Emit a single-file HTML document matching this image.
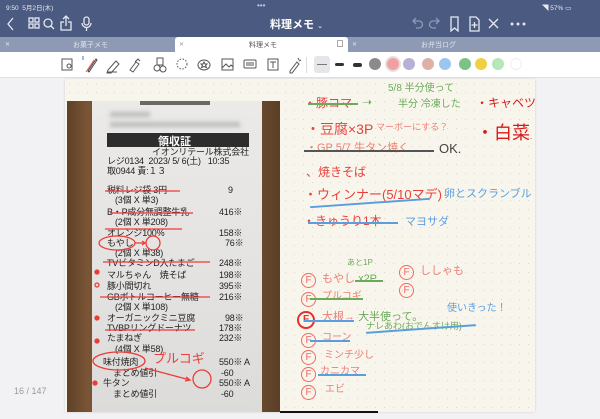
<!DOCTYPE html>
<html><head><meta charset="utf-8"><style>
*{margin:0;padding:0;box-sizing:border-box}
body{width:600px;height:419px;overflow:hidden;background:#f2f2f4;font-family:"Liberation Sans","Noto Sans CJK JP",sans-serif;position:relative}
.a{position:absolute;white-space:nowrap}
#top{position:absolute;left:0;top:0;width:600px;height:37px;background:#4b5a80}
#tabs{position:absolute;left:0;top:37px;width:600px;height:15px;background:#8e9ab4}
#tool{position:absolute;left:0;top:52px;width:600px;height:26px;background:#fff;border-bottom:1px solid #e2e2e2}
#page{position:absolute;left:65px;top:79px;width:470px;height:333px;background:#f8f6ec;background-image:radial-gradient(#dcd9cc 0.6px,transparent 0.8px);background-size:9px 9px;box-shadow:0 0 2px #ccc}
#photo{position:absolute;left:67px;top:101px;width:213px;height:311px;background:linear-gradient(90deg,#5e4128,#7b5535 10%,#6a4a2e 20%,#7a5838 80%,#5a3e26)}
#paper{position:absolute;left:92px;top:101px;width:170px;height:311px;background:linear-gradient(180deg,#ebeae8,#e3e2e0 60%,#dcdbd9)}
.r{font-size:9px;color:#222;line-height:10px;letter-spacing:-0.2px}
.h{font-family:"Liberation Sans","Noto Sans CJK JP",sans-serif;line-height:1}
.red{color:#e8403a}.grn{color:#6aaa5a}.blu{color:#5a9ee0}.pnk{color:#ee7d72}
.s{position:absolute;height:2px}
.f{position:absolute;width:15px;height:15px;border:1.3px solid #ee6a60;border-radius:50%;color:#ee6a60;font-size:10px;text-align:center;line-height:13px}
.dot{position:absolute;top:58px;width:12px;height:12px;border-radius:50%}
</style></head><body>
<div id="top"></div>
<div class="a" style="left:6px;top:2px;font-size:6.5px;color:#e8ebf2">9:50 &nbsp;5月2日(木)</div>
<div class="a" style="left:257px;top:1px;font-size:8px;color:#c8cde0">•••</div>
<div class="a" style="left:542px;top:2px;font-size:6.5px;color:#e8ebf2">◥ 57% ▭</div>
<div class="a" style="left:270px;top:16px;font-size:11px;color:#fff;font-weight:bold">料理メモ <span style="font-size:7px;font-weight:normal">⌄</span></div>
<svg class="a" style="left:0;top:14px" width="600" height="20" fill="none" stroke="#e6e9f2" stroke-width="1.3">
<path d="M13 4l-5 6 5 6"/>
<rect x="29" y="4" width="4" height="4"/><rect x="35" y="4" width="4" height="4"/><rect x="29" y="10" width="4" height="4"/><rect x="35" y="10" width="4" height="4"/>
<circle cx="48" cy="9" r="4"/><path d="M51 12l3 3"/>
<path d="M64 8h-3v8h10v-8h-3M66 12V3M63 5l3-3 3 3"/>
<rect x="84" y="3" width="5" height="8" rx="2.5"/><path d="M82 9a4.5 4.5 0 009 0M86.5 14v3"/>
<path stroke="#8f9ab8" d="M413 7h6a3.5 3.5 0 010 7h-3M416 4l-3 3 3 3M439 7h-6a3.5 3.5 0 000 7h3M436 4l3 3-3 3"/>
<path d="M451 3h7v14l-3.5-3-3.5 3z"/>
<path d="M470 3h6l3 3v11h-9zM474.5 8v6M471.5 11h6"/>
<path d="M489 5l9 9M498 5l-9 9"/>
<circle cx="512" cy="10" r=".8" fill="#fff"/><circle cx="518" cy="10" r=".8" fill="#fff"/><circle cx="524" cy="10" r=".8" fill="#fff"/>
</svg>
<div id="tabs"></div>
<div class="a" style="left:175px;top:37px;width:173px;height:16px;background:#fff;border-radius:3px 3px 0 0"></div>
<div class="a" style="left:5px;top:41px;font-size:6px;color:#dfe3ec">✕</div>
<div class="a" style="left:73px;top:40px;font-size:7px;color:#dfe3ec">お菓子メモ</div>
<div class="a" style="left:179px;top:41px;font-size:6px;color:#999">✕</div>
<div class="a" style="left:249px;top:40px;font-size:7px;color:#555">料理メモ</div>
<div class="a" style="left:337px;top:40px;width:6px;height:7px;border:1px solid #aaa"></div>
<div class="a" style="left:352px;top:41px;font-size:6px;color:#dfe3ec">✕</div>
<div class="a" style="left:421px;top:40px;font-size:7px;color:#dfe3ec">お弁当ログ</div>
<div id="tool"></div>
<svg class="a" style="left:0;top:52px" width="600" height="26" fill="none" stroke="#555" stroke-width="1">
<rect x="62" y="7" width="10" height="11"/><circle cx="69" cy="14" r="2"/>
<path stroke="#e55" d="M86 20l8-12"/><path stroke="#444" d="M88 19l8-12 1 1-8 12z"/><path stroke="#3a7bd5" d="M83 4v4"/>
<path d="M108 18l8-9 3 3-8 9h-4zM107 20h10"/>
<path d="M130 18l6-8 3 2-6 8zM135 10l3-3 2 2"/>
<rect x="157" y="6" width="6" height="7"/><circle cx="157" cy="16" r="3"/><circle cx="163" cy="17" r="3"/>
<circle cx="182" cy="12" r="5" stroke-dasharray="1.5 1.5"/>
<ellipse cx="204" cy="13" rx="6" ry="5"/><path d="M204 10l1 2h2l-1.5 1.5 1 2-2.5-1-2.5 1 1-2-1.5-1.5h2z"/>
<rect x="222" y="7" width="11" height="11"/><path d="M222 16l4-4 3 3 2-2 2 2"/>
<rect x="244" y="8" width="12" height="8" rx="1"/><path d="M246 11h8M246 13h8"/>
<rect x="268" y="7" width="10" height="11"/><path d="M270 10h6M273 10v6"/>
<path d="M290 19l7-9 2 2-7 9h-2zM298 6l1 2M301 8l-2 1"/>
</svg>
<div class="a" style="left:306px;top:57px;width:1px;height:16px;background:#ddd"></div>
<div class="a" style="left:314px;top:56px;width:16px;height:17px;background:#e6e6ea;border-radius:3px"></div>
<div class="a" style="left:317px;top:64px;width:10px;height:1px;background:#777"></div>
<div class="a" style="left:335px;top:63px;width:9px;height:3px;background:#333;border-radius:2px"></div>
<div class="a" style="left:353px;top:63px;width:9px;height:3.5px;background:#333;border-radius:2px"></div>
<div class="dot" style="left:369px;background:#8b8b8b"></div>
<div class="dot" style="left:387px;background:#f0a0a0;box-shadow:0 0 0 2px #e8e0e0"></div>
<div class="dot" style="left:403px;background:#b8b0d6"></div>
<div class="dot" style="left:422px;background:#dfb0a8"></div>
<div class="dot" style="left:439px;background:#9dc6ef"></div>
<div class="dot" style="left:459px;background:#7cc288"></div>
<div class="dot" style="left:475px;background:#f0d040"></div>
<div class="dot" style="left:492px;background:#b4e8b8"></div>
<div class="dot" style="left:510px;background:#fff;border:1px solid #eee"></div>

<div id="page"></div>
<div id="photo"></div>
<div id="paper"></div>
<div class="a" style="left:140px;top:101px;width:70px;height:4px;background:#333;opacity:.7"></div>
<div class="a" style="left:110px;top:112px;width:40px;height:5px;background:#bbb;filter:blur(2px)"></div>
<div class="a" style="left:110px;top:122px;width:130px;height:5px;background:#bbb;filter:blur(2px)"></div>
<div class="a" style="left:107px;top:133px;width:142px;height:14px;background:#2d2d2d"></div>
<div class="a" style="left:158px;top:133px;font-size:11px;color:#fff;font-weight:bold">領収証</div>
<div class="a r" style="left:152px;top:147px">イオンリテール株式会社</div>
<div class="a r" style="left:107px;top:156px">レジ0134 &nbsp;2023/ 5/ 6(土) &nbsp;&nbsp;10:35</div>
<div class="a r" style="left:107px;top:166px">取0944 責:１３</div>
<div class="a r" style="left:107px;top:185px">税料レジ袋 3円</div><div class="a r" style="left:228px;top:185px">9</div>
<div class="a r" style="left:115px;top:195px">(3個 X 単3)</div>
<div class="a r" style="left:107px;top:207px">B・P成分無調整牛乳</div><div class="a r" style="left:219px;top:207px">416※</div>
<div class="a r" style="left:115px;top:217px">(2個 X 単208)</div>
<div class="a r" style="left:107px;top:228px">オレンジ100%</div><div class="a r" style="left:219px;top:228px">158※</div>
<div class="a r" style="left:107px;top:238px">もやし</div><div class="a r" style="left:225px;top:238px">76※</div>
<div class="a r" style="left:115px;top:248px">(2個 X 単38)</div>
<div class="a r" style="left:107px;top:258px">TVビタミンD入たまご</div><div class="a r" style="left:219px;top:258px">248※</div>
<div class="a r" style="left:107px;top:270px">マルちゃん　焼そば</div><div class="a r" style="left:219px;top:270px">198※</div>
<div class="a r" style="left:107px;top:281px">豚小間切れ</div><div class="a r" style="left:219px;top:281px">395※</div>
<div class="a r" style="left:107px;top:292px">GBボトルコーヒー無糖</div><div class="a r" style="left:219px;top:292px">216※</div>
<div class="a r" style="left:115px;top:302px">(2個 X 単108)</div>
<div class="a r" style="left:107px;top:313px">オーガニックミニ豆腐</div><div class="a r" style="left:225px;top:313px">98※</div>
<div class="a r" style="left:107px;top:323px">TVBPリングドーナツ</div><div class="a r" style="left:219px;top:323px">178※</div>
<div class="a r" style="left:107px;top:333px">たまねぎ</div><div class="a r" style="left:219px;top:333px">232※</div>
<div class="a r" style="left:115px;top:344px">(4個 X 単58)</div>
<div class="a r" style="left:103px;top:357px">味付焼肉</div><div class="a r" style="left:219px;top:357px">550※ A</div>
<div class="a r" style="left:113px;top:368px">まとめ値引</div><div class="a r" style="left:221px;top:368px">-60</div>
<div class="a r" style="left:103px;top:378px">牛タン</div><div class="a r" style="left:219px;top:378px">550※ A</div>
<div class="a r" style="left:113px;top:389px">まとめ値引</div><div class="a r" style="left:221px;top:389px">-60</div>
<svg class="a" style="left:0;top:0" width="600" height="419" fill="none" stroke="#ee3b36" stroke-width="1.3">
<path d="M105 191h75M110 213h83M105 229h77M103 262h107M100 297h110M105 330h90"/>
<ellipse cx="117" cy="243" rx="18" ry="7"/><path d="M135 243h10M142 241l3 2-3 2"/><circle cx="153" cy="243" r="7"/>
<ellipse cx="119" cy="361" rx="26" ry="9"/><path d="M145 368q30 8 45 12M186 377l4 3-5 1"/><circle cx="202" cy="379" r="9"/>
<circle cx="97" cy="272" r="2" fill="#ee3b36"/><circle cx="97" cy="285" r="2"/><circle cx="97" cy="318" r="2" fill="#ee3b36"/><circle cx="97" cy="341" r="2" fill="#ee3b36"/><circle cx="95" cy="383" r="2" fill="#ee3b36"/>
</svg>
<div class="a h red" style="left:153px;top:352px;font-size:13px">プルコギ</div>
<div class="a" style="left:14px;top:386px;font-size:9px;color:#999">16 / 147</div>
<div class="a" style="left:280px;top:411px;width:98px;height:2px;background:#111"></div>

<div class="a h red" style="left:304px;top:97px;font-size:12px">・豚コマ</div>
<div class="s" style="left:308px;top:103px;width:50px;background:#6aaa5a"></div>
<div class="a h grn" style="left:362px;top:96px;font-size:12px">➝</div>
<div class="a h grn" style="left:388px;top:84px;font-size:10px">5/8 半分使って</div>
<div class="a h grn" style="left:398px;top:100px;font-size:10px">半分 冷凍した</div>
<div class="a h" style="left:476px;top:97px;font-size:12px;color:#d81a1a">・キャベツ</div>
<div class="a h red" style="left:306px;top:122px;font-size:14px">・豆腐×3P</div>
<div class="a h pnk" style="left:376px;top:123px;font-size:9px">マーボーにする？</div>
<div class="a h" style="left:476px;top:124px;font-size:18px;color:#d81a1a">・白菜<span style="font-size:8px">.</span></div>
<div class="a h pnk" style="left:306px;top:143px;font-size:11px">・GP 5/7 牛タン焼く</div>
<div class="s" style="left:304px;top:150px;width:130px;background:#555"></div>
<div class="a h" style="left:439px;top:142px;font-size:13px;color:#444">OK.</div>
<div class="a h red" style="left:306px;top:166px;font-size:12px">、焼きそば</div>
<div class="a h red" style="left:304px;top:188px;font-size:13px">・ウィンナー(5/10マデ)</div>
<div class="s" style="left:310px;top:202px;width:120px;background:#5a9ee0;transform:rotate(-4deg)"></div>
<div class="a h blu" style="left:444px;top:189px;font-size:11px">卵とスクランブル</div>
<div class="a h red" style="left:303px;top:215px;font-size:12px">・きゅうり1本</div>
<div class="s" style="left:308px;top:222px;width:90px;background:#5a9ee0"></div>
<div class="a h blu" style="left:405px;top:217px;font-size:11px">マヨサダ</div>
<div class="a h grn" style="left:347px;top:259px;font-size:8px">あと1P</div>
<div class="f" style="left:301px;top:273px">F</div><div class="a h pnk" style="left:322px;top:274px;font-size:11px">もやし <span class="grn">x2P</span></div>
<div class="s" style="left:355px;top:280px;width:28px;background:#6aaa5a"></div>
<div class="f" style="left:399px;top:265px">F</div><div class="a h pnk" style="left:420px;top:266px;font-size:11px">ししゃも</div>
<div class="f" style="left:399px;top:283px">F</div>
<div class="f" style="left:301px;top:292px">F</div><div class="a h pnk" style="left:322px;top:292px;font-size:10px">プルコギ</div>
<div class="s" style="left:310px;top:298px;width:53px;background:#6aaa5a"></div>
<div class="f" style="left:297px;top:311px;width:18px;height:18px;border:2px solid #e8302a;color:#e8302a;font-weight:bold;line-height:14px">F</div>
<div class="a h pnk" style="left:322px;top:312px;font-size:11px">大根→ <span class="grn">大半使って。</span></div>
<div class="s" style="left:304px;top:320px;width:50px;background:#5a9ee0"></div>
<div class="a h blu" style="left:447px;top:304px;font-size:10px">使いきった！</div>
<div class="a h grn" style="left:366px;top:322px;font-size:9px">ナレあわ(おでんすけ用)</div>
<div class="s" style="left:366px;top:328px;width:110px;background:#5a9ee0;transform:rotate(-4deg)"></div>
<div class="f" style="left:301px;top:333px">F</div><div class="a h pnk" style="left:322px;top:333px;font-size:10px">コーン</div>
<div class="s" style="left:310px;top:340px;width:40px;background:#5a9ee0"></div>
<div class="f" style="left:301px;top:350px">F</div><div class="a h pnk" style="left:324px;top:351px;font-size:10px">ミンチ少し</div>
<div class="f" style="left:301px;top:367px">F</div><div class="a h pnk" style="left:320px;top:367px;font-size:10px">カニカマ</div>
<div class="s" style="left:318px;top:374px;width:48px;background:#5a9ee0"></div>
<div class="f" style="left:301px;top:385px">F</div><div class="a h pnk" style="left:325px;top:385px;font-size:10px">エビ</div>
</body></html>
